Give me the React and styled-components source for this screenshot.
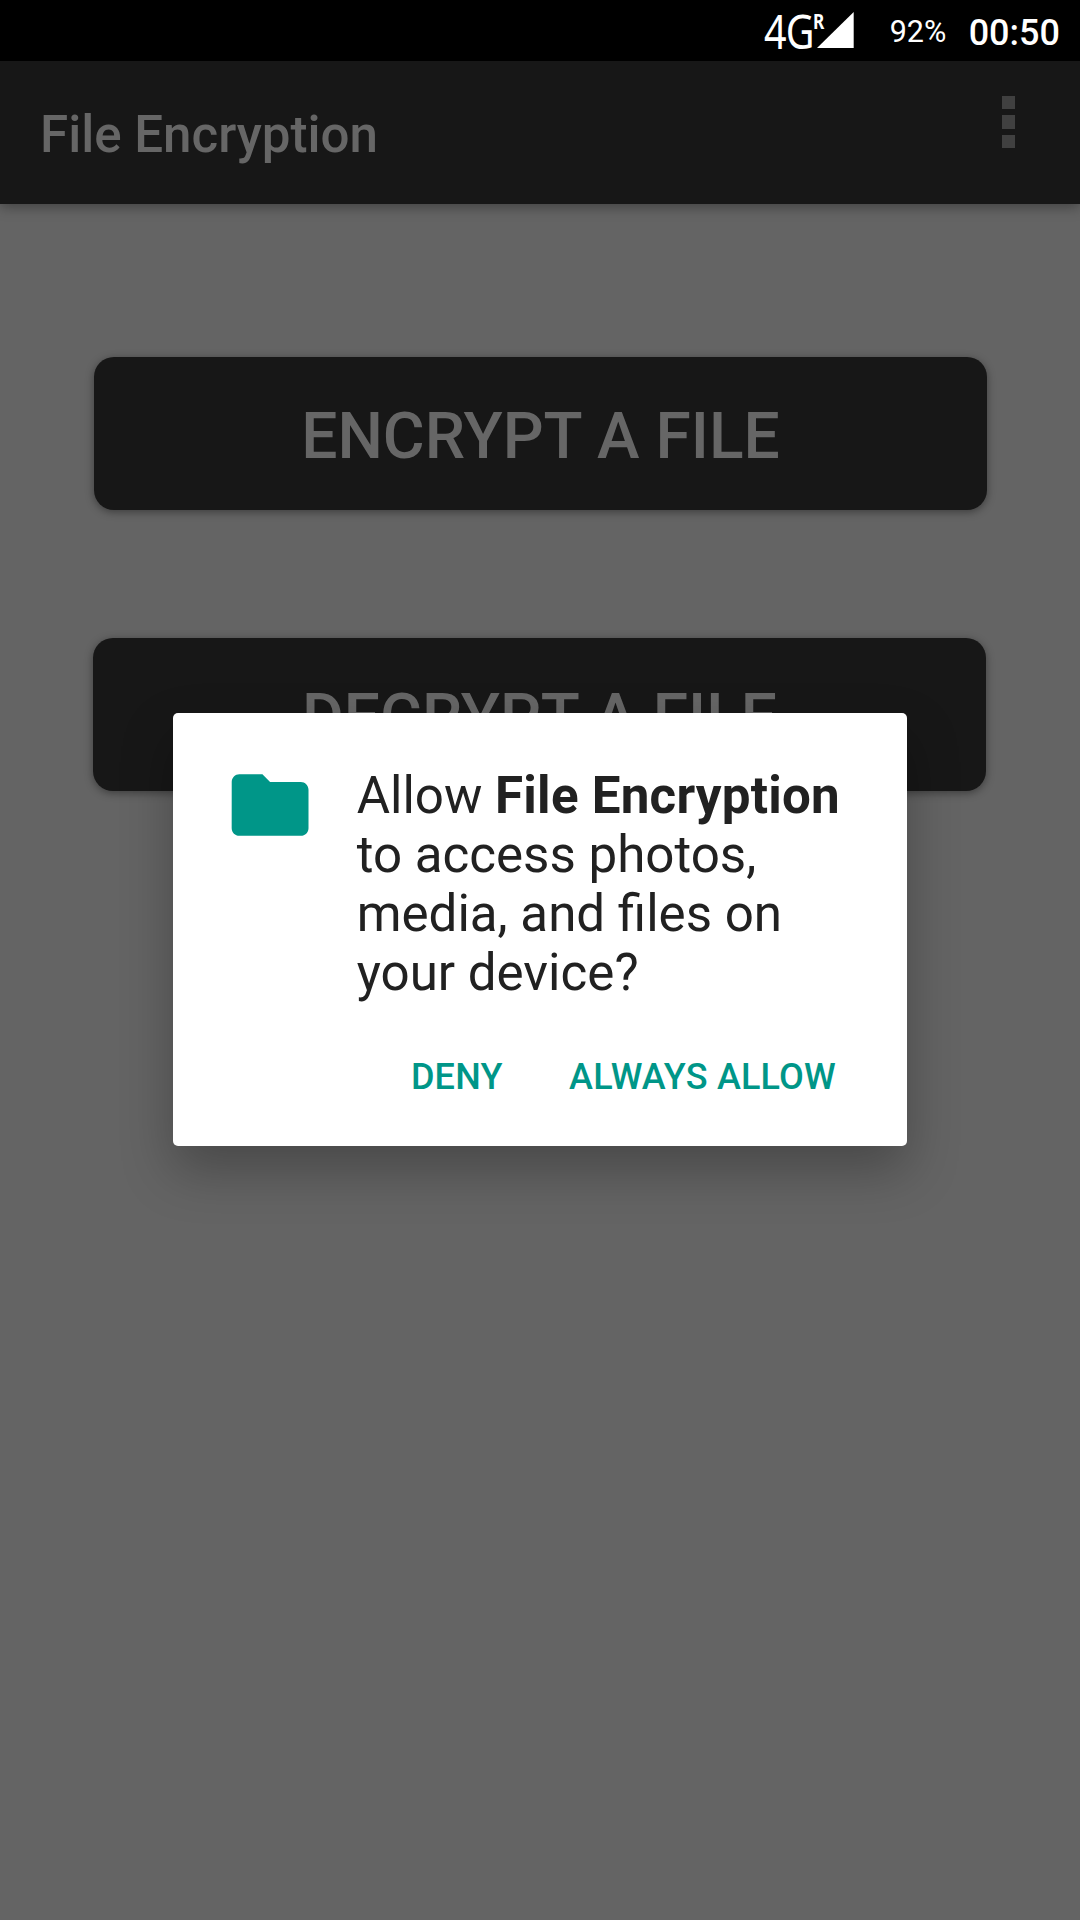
import React from "react";
import styled, { createGlobalStyle } from "styled-components";

const GlobalStyle = createGlobalStyle`
  *, *::before, *::after { box-sizing: border-box; }
  body {
    margin: 0;
    background: #646464;
    font-family: Roboto, "Liberation Sans", sans-serif;
  }
`;

const Screen = styled.div`
  position: relative;
  width: 1080px;
  height: 1920px;
  overflow: hidden;
  background: #646464;
  display: flex;
  flex-direction: column;
`;

const StatusBar = styled.header`
  flex: none;
  height: 61px;
  padding-right: 20px;
  background: #000;
  color: #fff;
  display: flex;
  justify-content: flex-end;
  align-items: flex-start;
  white-space: nowrap;
`;

const Signal = styled.div`
  display: flex;
  align-items: flex-start;
  width: 90px;
  height: 61px;
  margin-right: 36px;
  font-family: "Noto Sans", sans-serif;
`;

const Network = styled.span`
  flex: none;
  width: 49px;
  font-size: 47px;
  line-height: 62px;
  letter-spacing: -1px;
  transform: scaleX(0.84);
  transform-origin: left;
`;

const Roaming = styled.span`
  flex: none;
  width: 4px;
  font-size: 21.5px;
  line-height: 41px;
  font-weight: 700;
  transform: scaleX(0.8);
  transform-origin: left;
`;

const SignalIcon = styled.svg`
  flex: none;
  width: 37px;
  height: 36px;
  margin-top: 12px;
`;

const Battery = styled.span`
  width: 79px;
  font-size: 30.5px;
  line-height: 63px;
`;

const Clock = styled.span`
  font-size: 36px;
  line-height: 66px;
  font-weight: 500;
`;

const AppBar = styled.div`
  flex: none;
  height: 143px;
  padding: 0 65px 0 40px;
  background: #171717;
  box-shadow: 0 3px 12px rgba(0, 0, 0, 0.35);
  display: flex;
  justify-content: space-between;
  align-items: flex-start;
`;

const Title = styled.h1`
  margin: 0;
  padding-top: 44px;
  font-size: 51.1px;
  line-height: 60px;
  font-weight: 500;
  color: #666;
`;

const Overflow = styled.div`
  display: flex;
  flex-direction: column;
  gap: 6px;
  padding-top: 35px;
`;

const Dot = styled.i`
  width: 13px;
  height: 13.4px;
  background: #404040;
`;

const Actions = styled.main`
  display: flex;
  flex-direction: column;
  gap: 128px;
  padding: 153px 93px 0;
`;

const ActionButton = styled.button`
  width: 893px;
  height: 153px;
  padding: 7px 0 0;
  border: 0;
  border-radius: 20px;
  align-self: ${(p) => p.$align};
  background: #171717;
  box-shadow: 0 2px 8px rgba(0, 0, 0, 0.4);
  color: #666;
  font: 500 64.1px/76px Roboto, sans-serif;
  text-transform: uppercase;
`;

const Dialog = styled.section`
  position: absolute;
  left: 173px;
  top: 713px;
  width: 734px;
  height: 433px;
  padding: 45.5px 56px 0 51px;
  border-radius: 5px;
  background: #fff;
  box-shadow: 0 24px 52px rgba(0, 0, 0, 0.28);
  display: flex;
  flex-direction: column;
`;

const Prompt = styled.div`
  display: flex;
  gap: 40.5px;
`;

const FolderIcon = styled.svg`
  flex: none;
  width: 92.2px;
  height: 92.2px;
`;

const Message = styled.p`
  margin: 7px 0 0;
  font-size: 51.1px;
  line-height: 59px;
  color: #212121;
  white-space: nowrap;
`;

const AppName = styled.b`
  letter-spacing: 0.24px;
`;

const DialogActions = styled.div`
  display: flex;
  justify-content: flex-end;
  gap: 66.5px;
  padding: 54px 15px 0 0;
`;

const TextButton = styled.button`
  padding: 0;
  border: 0;
  background: none;
  color: #009688;
  font: 500 36px/42px Roboto, sans-serif;
  letter-spacing: 0.2px;
  text-transform: uppercase;
`;

export default function App() {
  return (
    <Screen>
      <GlobalStyle />
      <StatusBar>
        <Signal>
          <Network>4G</Network>
          <Roaming>R</Roaming>
          <SignalIcon viewBox="0 0 37 36">
            <path d="M36.7 0V36H0z" fill="#fff" />
          </SignalIcon>
        </Signal>
        <Battery>92%</Battery>
        <Clock>00:50</Clock>
      </StatusBar>
      <AppBar>
        <Title>File Encryption</Title>
        <Overflow>
          <Dot />
          <Dot />
          <Dot />
        </Overflow>
      </AppBar>
      <Actions>
        <ActionButton $align="flex-end">Encrypt a file</ActionButton>
        <ActionButton $align="flex-start">Decrypt a file</ActionButton>
      </Actions>
      <Dialog>
        <Prompt>
          <FolderIcon viewBox="0 0 24 24">
            <path
              d="M10 4H4c-1.1 0-1.99.9-1.99 2L2 18c0 1.1.9 2 2 2h16c1.1 0 2-.9 2-2V8c0-1.1-.9-2-2-2h-8l-2-2z"
              fill="#009688"
            />
          </FolderIcon>
          <Message>
            Allow <AppName>File Encryption</AppName>
            <br />
            to access photos,
            <br />
            media, and files on
            <br />
            your device?
          </Message>
        </Prompt>
        <DialogActions>
          <TextButton>Deny</TextButton>
          <TextButton>Always allow</TextButton>
        </DialogActions>
      </Dialog>
    </Screen>
  );
}
